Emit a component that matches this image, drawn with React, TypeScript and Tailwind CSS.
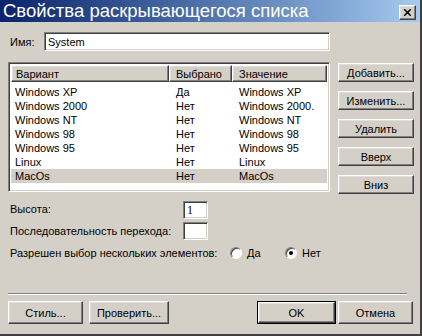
import { X } from 'lucide-react'

const raised =
  'border border-t-white border-l-white border-r-[#404040] border-b-[#404040] shadow-[inset_-1px_-1px_0_#808080,inset_1px_1px_0_#dfdfdf] bg-[#d4d0c8]'
const sunken =
  'border border-t-[#808080] border-l-[#808080] border-r-white border-b-white shadow-[inset_1px_1px_0_#404040,inset_-1px_-1px_0_#d4d0c8] bg-white'

const rows = [
  ['Windows XP', 'Да', 'Windows XP'],
  ['Windows 2000', 'Нет', 'Windows 2000.'],
  ['Windows NT', 'Нет', 'Windows NT'],
  ['Windows 98', 'Нет', 'Windows 98'],
  ['Windows 95', 'Нет', 'Windows 95'],
  ['Linux', 'Нет', 'Linux'],
  ['MacOs', 'Нет', 'MacOs'],
]

function Btn({ label, className = '' }: { label: string; className?: string }) {
  return (
    <div className={`${raised} flex items-center justify-center ${className}`}>{label}</div>
  )
}

function Radio({ checked }: { checked?: boolean }) {
  return (
    <span className="w-[12px] h-[12px] rounded-full bg-white border border-t-[#808080] border-l-[#808080] border-r-white border-b-white shadow-[inset_1px_1px_0_#404040] flex items-center justify-center">
      {checked && <span className="w-[4px] h-[4px] rounded-full bg-black" />}
    </span>
  )
}

export default function App() {
  return (
    <div className="w-[422px] h-[336px] bg-[#d4d0c8] border-r-2 border-b-2 border-r-[#404040] border-b-[#404040] text-[11px] text-black font-['Liberation_Sans',Arial,sans-serif] leading-[14px] overflow-hidden flex flex-col">
      {/* Title bar */}
      <div className="h-[22px] flex items-center justify-between bg-gradient-to-r from-[#0a246a] to-[#a6caf0] pl-[3px] pr-[4px]">
        <span className="text-white text-[18.5px] leading-[22px]">Свойства раскрывающегося списка</span>
        <div className={`${raised} w-[17px] h-[15px] flex items-center justify-center mt-[3px]`}>
          <X className="w-[11px] h-[11px]" strokeWidth={3.5} />
        </div>
      </div>

      {/* Name */}
      <div className="flex items-center mt-[10px] pl-[10px]">
        <span className="w-[34px]">Имя:</span>
        <div className={`${sunken} w-[286px] h-[19px] flex items-center pl-[3px]`}>System</div>
      </div>

      {/* List + side buttons */}
      <div className="flex mt-[11px] pl-[8px]">
        <div className={`${sunken} w-[322px] h-[130px] p-[2px]`}>
          <div className="flex h-[17px]">
            <div className={`${raised} w-[158px] flex items-center pl-[4px]`}>Вариант</div>
            <div className={`${raised} w-[63px] flex items-center pl-[6px]`}>Выбрано</div>
            <div className={`${raised} w-[95px] flex items-center pl-[6px]`}>Значение</div>
          </div>
          <div className="pt-[3px]">
            {rows.map((r, i) => (
              <div
                key={r[0]}
                className={`flex h-[14px] items-center ${i === rows.length - 1 ? 'bg-[#d4d0c8]' : ''} w-[316px]`}
              >
                <span className="w-[165px] pl-[4px]">{r[0]}</span>
                <span className="w-[63px]">{r[1]}</span>
                <span>{r[2]}</span>
              </div>
            ))}
          </div>
        </div>
        <div className="flex flex-col gap-[9px] ml-[8px] mt-[1px]">
          <Btn label="Добавить..." className="w-[76px] h-[19px]" />
          <Btn label="Изменить..." className="w-[76px] h-[19px]" />
          <Btn label="Удалить" className="w-[76px] h-[19px]" />
          <Btn label="Вверх" className="w-[76px] h-[19px]" />
          <Btn label="Вниз" className="w-[76px] h-[19px]" />
        </div>
      </div>

      {/* Fields */}
      <div className="flex flex-col pl-[10px] mt-[7px] gap-[3px]">
        <div className="flex">
          <span className="w-[173px] pt-[1px]">Высота:</span>
          <div className={`${sunken} w-[25px] h-[18px] flex items-center pl-[3px] font-['Liberation_Serif',serif] text-[12px] text-black`}>1</div>
        </div>
        <div className="flex items-center">
          <span className="w-[173px]">Последовательность перехода:</span>
          <div className={`${sunken} w-[25px] h-[18px]`} />
        </div>
        <div className="flex items-center mt-[3px]">
          <span className="w-[220px]">Разрешен выбор нескольких элементов:</span>
          <Radio />
          <span className="ml-[5px] w-[38px]">Да</span>
          <Radio checked />
          <span className="ml-[5px]">Нет</span>
        </div>
      </div>

      {/* Separator */}
      <div className="mt-auto mx-[8px] w-[399px] border-t border-t-[#808080] border-b border-b-white" />

      {/* Bottom buttons */}
      <div className="flex items-center pl-[8px] mt-[6px] mb-[10px]">
        <Btn label="Стиль..." className="w-[75px] h-[23px]" />
        <Btn label="Проверить..." className="w-[80px] h-[23px] ml-[6px]" />
        <div className="ml-[88px] w-[79px] h-[23px] border border-black">
          <Btn label="OK" className="w-full h-full" />
        </div>
        <Btn label="Отмена" className="w-[75px] h-[23px] ml-[2px]" />
      </div>
    </div>
  )
}
